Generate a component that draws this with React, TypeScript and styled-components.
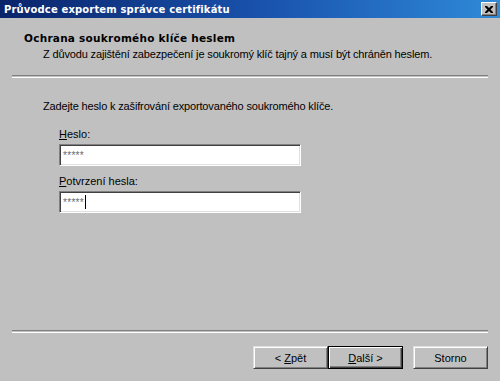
import React from 'react';
import styled, { createGlobalStyle } from 'styled-components';

const GlobalStyle = createGlobalStyle`
  html, body {
    margin: 0;
    padding: 0;
    background: #c0c0c0;
  }
  body {
    font-family: 'Liberation Sans', Arial, sans-serif;
    font-size: 11px;
    color: #000;
  }
`;

const Window = styled.div`
  width: 500px;
  height: 381px;
  display: flex;
  flex-direction: column;
  background: #c0c0c0;
  overflow: hidden;
`;

const TitleBar = styled.div`
  height: 18px;
  display: flex;
  align-items: center;
  justify-content: space-between;
  padding: 0 3px 0 4px;
  background: linear-gradient(to right, #0a246a 0%, #1a55b0 55%, #2f8ad8 100%);
  color: #fff;
  font-family: 'DejaVu Sans', Verdana, sans-serif;
  font-weight: bold;
  font-size: 10px;
  letter-spacing: 0.15px;
`;

const CloseButton = styled.div`
  width: 16px;
  height: 14px;
  box-sizing: border-box;
  display: flex;
  align-items: center;
  justify-content: center;
  background: #c0c0c0;
  border-top: 1px solid #fff;
  border-left: 1px solid #fff;
  border-right: 1px solid #404040;
  border-bottom: 1px solid #404040;
  box-shadow: inset -1px -1px 0 #808080;
`;

const Header = styled.div`
  padding: 13px 0 0 24px;
  height: 44px;
`;

const Heading = styled.div`
  font-family: 'DejaVu Sans', Verdana, sans-serif;
  font-weight: bold;
  font-size: 10.5px;
  letter-spacing: 0.25px;
  line-height: 14px;
`;

const SubHeading = styled.div`
  padding-left: 19px;
  margin-top: 3px;
  line-height: 13px;
  letter-spacing: -0.15px;
`;

const Separator = styled.div`
  margin: 0 12px;
  height: 1px;
  border-top: 1px solid #808080;
  border-bottom: 1px solid #fff;
`;

const Body = styled.div`
  flex: 1;
  padding: 22px 0 0 43px;
`;

const Intro = styled.div`
  line-height: 13px;
  margin-bottom: 15px;
  letter-spacing: -0.15px;
`;

const Field = styled.div`
  padding-left: 16px;
  margin-bottom: 9px;
`;

const Label = styled.div`
  line-height: 13px;
  margin-bottom: 3px;
`;

const Key = styled.span`
  text-decoration: underline;
`;

const Input = styled.div`
  width: 242px;
  height: 22px;
  box-sizing: border-box;
  background: #fff;
  border-top: 1px solid #808080;
  border-left: 1px solid #808080;
  border-right: 1px solid #fff;
  border-bottom: 1px solid #fff;
  box-shadow: inset 1px 1px 0 #404040, inset -1px -1px 0 #dfdfdf;
  display: flex;
  align-items: center;
  padding-left: 3px;
  color: #6a6a6a;
  font-size: 10px;
  letter-spacing: 0.3px;
`;

const Caret = styled.span`
  display: inline-block;
  width: 1px;
  height: 14px;
  background: #000;
  margin-left: 1px;
`;

const Footer = styled.div`
  padding: 13px 12px 12px 0;
  display: flex;
  justify-content: flex-end;
`;

const Button = styled.div<{ $default?: boolean; $gap?: number }>`
  width: 75px;
  height: 23px;
  box-sizing: border-box;
  display: flex;
  align-items: center;
  justify-content: center;
  white-space: pre;
  margin-left: ${(p) => p.$gap ?? 0}px;
  background: #c0c0c0;
  border: 1px solid;
  border-color: ${(p) => (p.$default ? '#000' : '#dfdfdf #404040 #404040 #dfdfdf')};
  box-shadow: ${(p) =>
    p.$default
      ? 'inset 1px 1px 0 #fff, inset -1px -1px 0 #404040, inset -2px -2px 0 #808080'
      : 'inset 1px 1px 0 #fff, inset -1px -1px 0 #808080'};
`;

export default function App() {
  return (
    <Window>
      <GlobalStyle />
      <TitleBar>
        <span>Průvodce exportem správce certifikátu</span>
        <CloseButton>
          <svg width="8" height="7" viewBox="0 0 8 7">
            <path d="M0 0h2l2 2 2-2h2v1L5.5 3.5 8 6v1H6L4 5 2 7H0V6l2.5-2.5L0 1z" fill="#000" />
          </svg>
        </CloseButton>
      </TitleBar>
      <Header>
        <Heading>Ochrana soukromého klíče heslem</Heading>
        <SubHeading>Z důvodu zajištění zabezpečení je soukromý klíč tajný a musí být chráněn heslem.</SubHeading>
      </Header>
      <Separator />
      <Body>
        <Intro>Zadejte heslo k zašifrování exportovaného soukromého klíče.</Intro>
        <Field>
          <Label>
            <Key>H</Key>eslo:
          </Label>
          <Input>*****</Input>
        </Field>
        <Field>
          <Label>
            <Key>P</Key>otvrzení hesla:
          </Label>
          <Input>
            *****
            <Caret />
          </Input>
        </Field>
      </Body>
      <Separator />
      <Footer>
        <Button>
          {'< '}
          <Key>Z</Key>pět
        </Button>
        <Button $default>
          <Key>D</Key>
          {'alší >'}
        </Button>
        <Button $gap={10}>Storno</Button>
      </Footer>
    </Window>
  );
}
